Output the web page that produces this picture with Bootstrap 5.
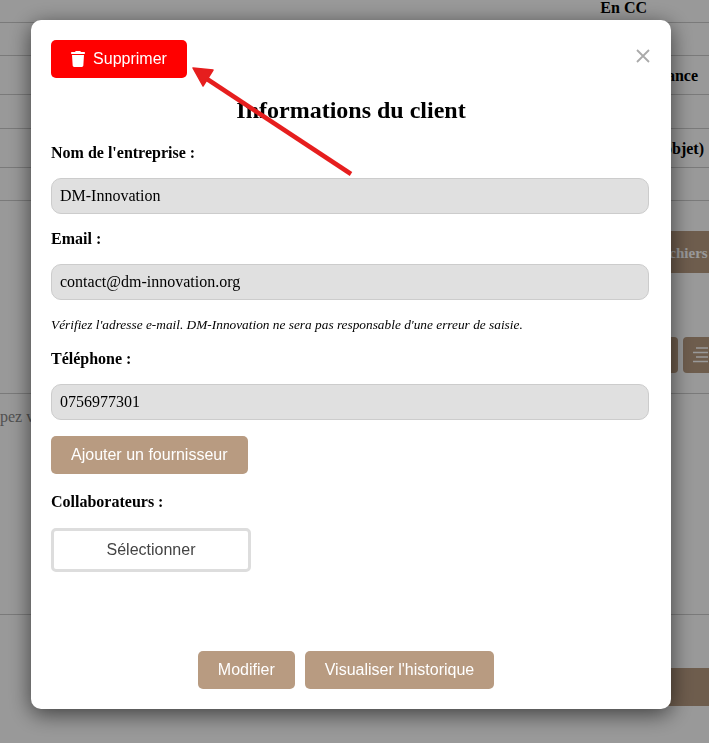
<!DOCTYPE html>
<html lang="fr">
<head>
<meta charset="utf-8">
<title>Informations du client</title>
<link href="https://cdn.jsdelivr.net/npm/bootstrap@5.3.0/dist/css/bootstrap.min.css" rel="stylesheet">
<style>
html,body{height:743px;overflow:hidden}
body{background:#fff;font-family:"Liberation Serif",serif;color:#000}
.bg-row{border-bottom:1px solid #ccc;font-weight:700;font-size:16px;text-align:right;padding-right:5px;box-sizing:border-box;white-space:nowrap}
.r1{height:23px;padding-right:62px;line-height:16px}
.r2{height:33px}.r3{height:39px;line-height:39px;padding-right:11px}.r4{height:34px}.r5{height:39px;line-height:40px}.r6{height:33px}
.brown{background:#b89b81;color:#fff;border:0;border-radius:5px}
.bg-files{height:42px;margin-top:30px;justify-content:flex-end;font-weight:700}
.bg-files span{width:60px;height:42px;line-height:44px;background:#b89b81;color:#fff;padding-left:7px;font-size:15px;overflow:hidden;white-space:nowrap}
.bg-tools{height:36px;margin-top:64px;justify-content:flex-end;gap:5px}
.bg-tool{background:#b89b81;border-radius:4px;height:36px}
.t1{width:30px}.t2{width:26px;padding:10px 0 0 10px;border-radius:4px 0 0 4px}
.bg-line2{margin-top:20px;border-top:1px solid #ccc;height:221px;padding-top:11px;color:#888;font-size:16px}
.bg-line3{border-top:1px solid #ccc;height:54px}
.bg-bar{height:38px;background:#b89b81;margin-left:600px}
.veil{background:rgba(0,0,0,.4);padding:20px 38px 34px 31px}
.dialog{width:640px;height:689px;background:#fff;border-radius:10px;box-shadow:0 5px 22px rgba(0,0,0,.6);padding:20px;position:relative}
.btn-del{background:#f00;color:#fff;width:136px;height:38px;border:0;border-radius:5px;font:16px "Liberation Sans",sans-serif;gap:8px}
.close-x{position:absolute;right:21px;top:29px;width:14px;height:14px}
.title{font-size:24px;font-weight:700;text-align:center;line-height:28px;margin:18px 0 0}
.lbl{font-size:16px;font-weight:700;line-height:18px;display:block;margin:16px 0}
.lbl-first{margin-top:20px}
.lbl-after-note{margin-top:17px}
.lbl-collab{margin-top:19px;margin-bottom:17px}
.fld{display:block;width:598px;height:36px;background:#e0e0e0;border:1px solid #ccc;border-radius:10px;padding:0 8px;font:16px "Liberation Serif",serif;color:#000;line-height:34px}
.note{font-size:13.33px;font-style:italic;line-height:16px;margin:17px 0 0}
.btn-ab{font:16px "Liberation Sans",sans-serif;height:38px;padding:0 20px}
.btn-add{margin-top:16px}
.sel{width:200px;height:44px;border:3px solid #ddd;border-radius:5px;background:#fff;color:#444;font:16px "Liberation Sans",sans-serif}
.foot{margin-top:79px;padding-right:10px;column-gap:10px}
.arrow{position:absolute;left:0;top:0;width:640px;height:200px;pointer-events:none}
</style>
</head>
<body>
<div class="bg-row r1">En CC</div>
<div class="bg-row r2"></div>
<div class="bg-row r3">Échéance</div>
<div class="bg-row r4"></div>
<div class="bg-row r5">(objet)</div>
<div class="bg-row r6"></div>
<div class="d-flex bg-files"><span>Fichiers</span></div>
<div class="d-flex bg-tools">
  <div class="bg-tool t1"></div>
  <div class="bg-tool t2">
    <svg width="15" height="16" viewBox="0 0 15 16" fill="none" stroke="#fff" stroke-width="1.500" class="d-block"><path d="M3 1h12M0 5.500h15M3 10h12M0 14.500h15"/></svg>
  </div>
</div>
<div class="bg-line2">pez votre message</div>
<div class="bg-line3"></div>
<div class="bg-bar"></div>

<div class="veil position-fixed top-0 start-0 w-100 h-100">
  <div class="dialog">
    <button type="button" class="btn-del d-flex align-items-center justify-content-center">
      <svg width="14" height="16" viewBox="0 0 448 512" fill="#fff"><path d="M135.2 17.7L128 32H32C14.3 32 0 46.3 0 64S14.3 96 32 96H416c17.7 0 32-14.3 32-32s-14.3-32-32-32H320l-7.2-14.3C307.4 6.8 296.3 0 284.2 0H163.8c-12.1 0-23.2 6.8-28.6 17.7zM416 128H32L53.2 467c1.600 25.3 22.6 45 47.9 45H346.9c25.3 0 46.3-19.7 47.9-45L416 128z"/></svg>
      <span>Supprimer</span>
    </button>
    <svg class="close-x" viewBox="0 0 14 14" stroke="#aaa" stroke-width="1.800"><path d="M1 1l12 12M13 1L1 13"/></svg>
    <h2 class="title">Informations du client</h2>
    <label class="lbl lbl-first">Nom de l'entreprise :</label>
    <div class="fld">DM-Innovation</div>
    <label class="lbl">Email :</label>
    <div class="fld">contact@dm-innovation.org</div>
    <p class="note">Vérifiez l'adresse e-mail. DM-Innovation ne sera pas responsable d'une erreur de saisie.</p>
    <label class="lbl lbl-after-note">Téléphone :</label>
    <div class="fld">0756977301</div>
    <button type="button" class="brown btn-ab d-block btn-add">Ajouter un fournisseur</button>
    <label class="lbl lbl-collab">Collaborateurs :</label>
    <button type="button" class="sel d-block">Sélectionner</button>
    <div class="d-flex justify-content-center foot">
      <button type="button" class="brown btn-ab">Modifier</button>
      <button type="button" class="brown btn-ab">Visualiser l'historique</button>
    </div>
    <svg class="arrow" viewBox="0 0 640 200">
      <path d="M320 154L176 59" stroke="#e61e1e" stroke-width="4.500" fill="none"/>
      <path d="M162 48L182 50L172 66Z" fill="#e61e1e" stroke="#e61e1e" stroke-width="1.500" stroke-linejoin="round"/>
    </svg>
  </div>
</div>
</body>
</html>
